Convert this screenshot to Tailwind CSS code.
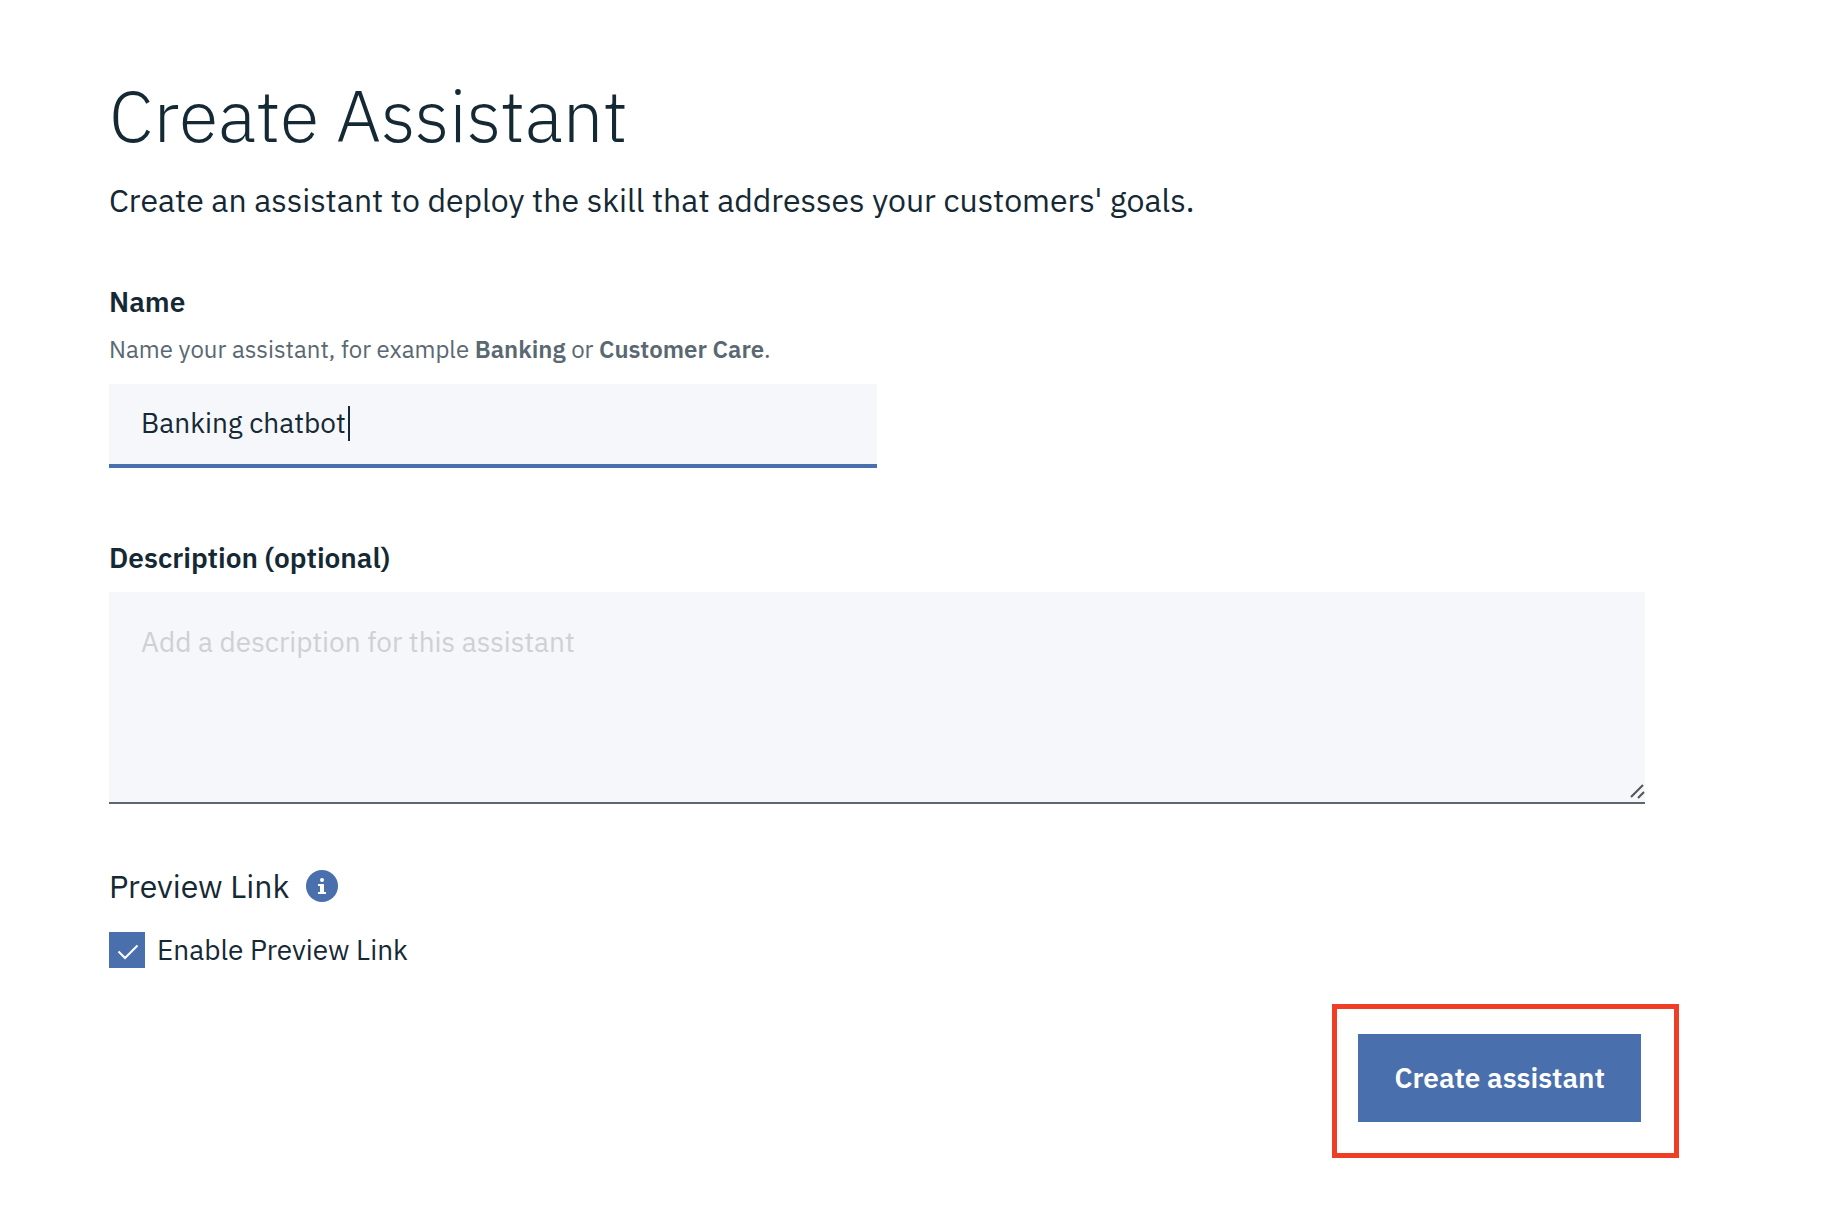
<!DOCTYPE html>
<html lang="en">
<head>
<meta charset="utf-8">
<meta name="viewport" content="width=device-width, initial-scale=1">
<title>Create Assistant</title>
<script src="https://cdn.jsdelivr.net/npm/@tailwindcss/browser@4"></script>
</head>
<body class="min-h-screen bg-white font-['IBM_Plex_Sans',Roboto,sans-serif] text-[#152935]">
<main class="pt-[75px] pr-[193px] pb-20 pl-[109px]">
  <h1 class="text-[72px] leading-[80px] font-light">Create Assistant</h1>
  <p class="mt-[25px] text-[32px] leading-10">Create an assistant to deploy the skill that addresses your customers' goals.</p>

  <form>
    <div class="mt-16">
      <label for="name" class="block text-[28px] leading-9 font-semibold">Name</label>
      <p id="name-help" class="mt-[13px] text-2xl leading-8 text-[#5a6872]">Name your assistant, for example <strong class="font-semibold">Banking</strong> or <strong class="font-semibold">Customer Care</strong>.</p>
      <div class="relative mt-[19px] w-1/2">
        <input id="name" type="text" value="Banking chatbot" aria-describedby="name-help" class="block h-[84px] w-full border-b-4 border-[#4970ad] bg-[#f5f7fb] px-8 pb-1 text-[28px] outline-none">
        <span class="absolute top-[22px] left-[239px] h-[35px] w-0.5 bg-[#152935]"></span>
      </div>
    </div>

    <div class="mt-[72px]">
      <label for="description" class="block text-[28px] leading-9 font-semibold">Description (optional)</label>
      <div class="relative mt-4">
        <textarea id="description" placeholder="Add a description for this assistant" class="block h-[212px] w-full resize-none border-b-2 border-[#5a6872] bg-[#f5f7fb] px-8 py-8 text-[28px] leading-9 outline-none placeholder:text-[#cdd1d4]"></textarea>
        <svg class="absolute right-0 bottom-1 size-4" viewBox="0 0 16 16" fill="none" stroke="#555" stroke-width="2" aria-hidden="true"><path d="M2 13 14 1M9 14l6-6"/></svg>
      </div>
    </div>

    <div class="mt-[62px] flex items-center gap-[17px]">
      <h2 class="text-[32px] leading-10">Preview Link</h2>
      <button type="button" aria-label="About the preview link" class="size-8">
        <svg class="size-8" viewBox="0 0 32 32" aria-hidden="true"><circle cx="16" cy="16" r="16" fill="#4970ad"/><circle cx="16" cy="10" r="2" fill="#fff"/><path d="M12 14h6v8h2v2h-8v-2h2v-6h-2z" fill="#fff"/></svg>
      </button>
    </div>
    <div class="mt-[26px] flex items-center gap-3">
      <span class="relative block size-9">
        <input id="preview" type="checkbox" checked class="block size-9 appearance-none bg-[#4970ad]">
        <svg class="pointer-events-none absolute inset-0 size-9" viewBox="0 0 36 36" fill="none" stroke="#fff" stroke-width="2" aria-hidden="true"><path d="m9.500 19.500 6.500 6.500 12.500-12.500"/></svg>
      </span>
      <label for="preview" class="text-[28px] leading-9">Enable Preview Link</label>
    </div>

    <div class="mt-[66px] mr-1 flex justify-end">
      <div class="relative">
        <button type="submit" class="block h-[88px] bg-[#4970ad] px-9 text-[28px] font-semibold text-white">Create assistant</button>
        <span class="pointer-events-none absolute -top-[30px] -right-[38px] -bottom-9 -left-[26px] border-5 border-[#ef3e25]"></span>
      </div>
    </div>
  </form>
</main>
</body>
</html>
